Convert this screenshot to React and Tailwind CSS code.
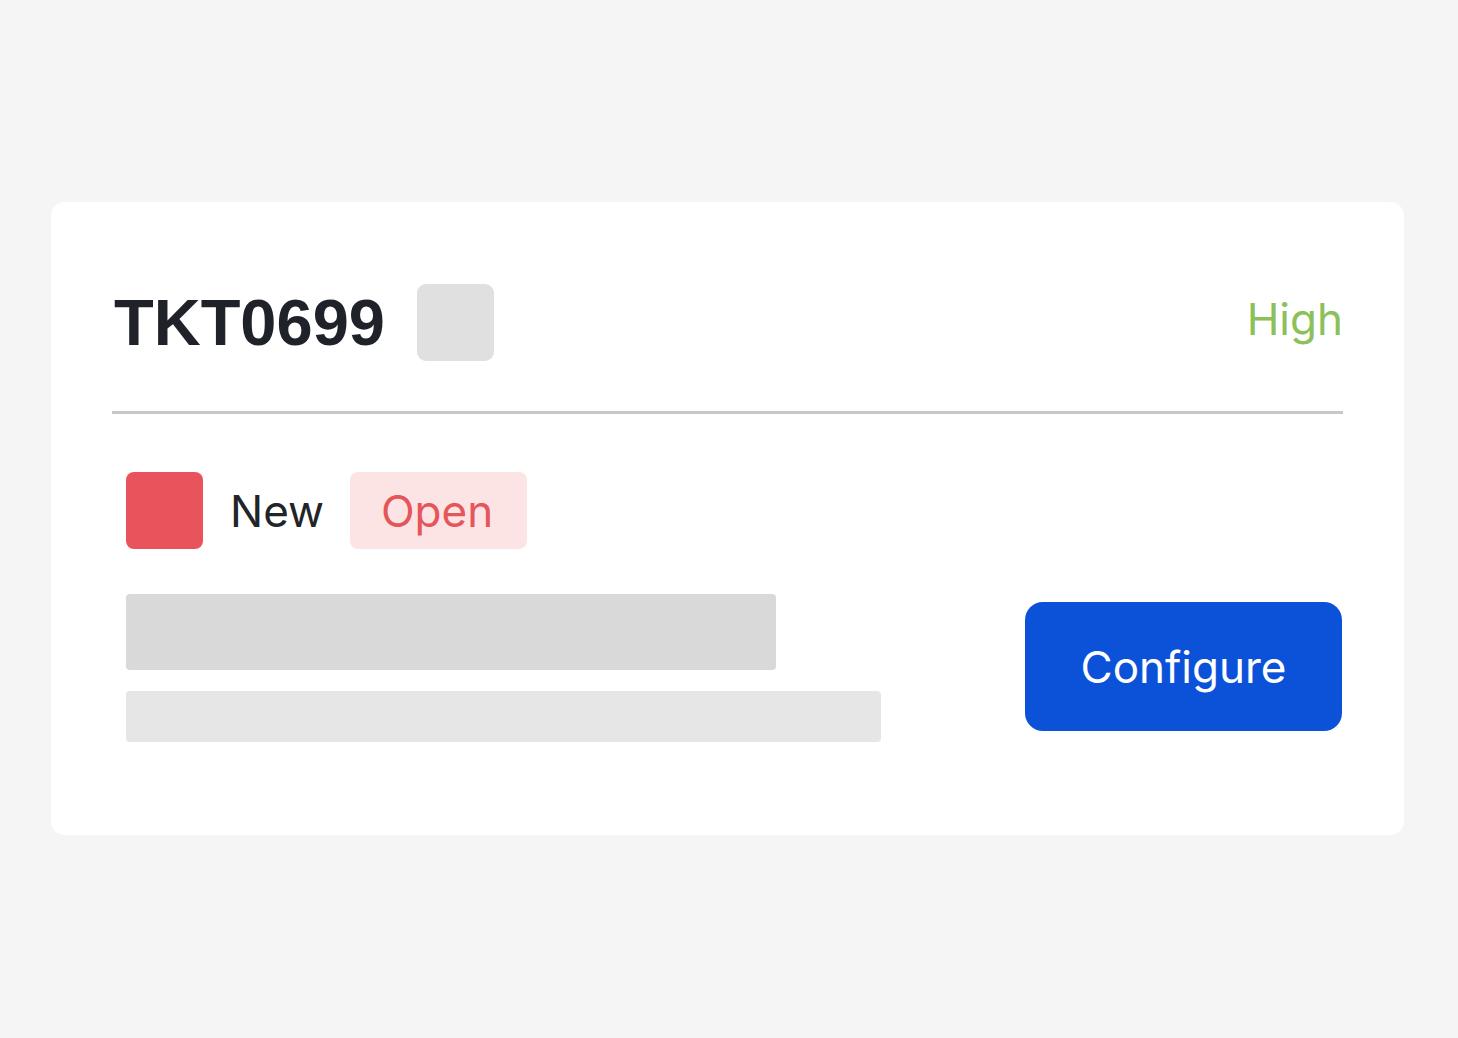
export default function App() {
  return (
    <div className="min-h-screen w-full bg-[#f5f5f5] pt-[202px] px-[51px] font-['Inter',sans-serif]">
      <div className="w-[1353px] h-[633px] bg-white rounded-[14px] px-[61px] pt-[82px]">
        <div className="flex items-center justify-between h-[77px]">
          <div className="flex items-center gap-[32px]">
            <span className="font-['Liberation_Sans',Arial,sans-serif] font-bold text-[65px] leading-none text-[#1f2228] pl-[2px]">
              TKT0699
            </span>
            <div className="w-[77px] h-[77px] rounded-[9px] bg-[#e0e0e0]" />
          </div>
          <span className="text-[44px] leading-none text-[#8bc05a] -mt-[8px]">High</span>
        </div>

        <div className="mt-[50px] h-[3px] bg-[#c8c8c8]" />

        <div className="px-[14px]">
          <div className="flex items-center mt-[58px] h-[77px]">
            <div className="w-[77px] h-[77px] rounded-[8px] bg-[#e9545c]" />
            <span className="ml-[27px] text-[44px] leading-none text-[#222428]">New</span>
            <div className="ml-[26px] h-[77px] w-[177px] rounded-[8px] bg-[#fde4e4] flex items-center justify-center pr-[3px]">
              <span className="text-[44px] leading-none text-[#e5565b]">Open</span>
            </div>
          </div>

          <div className="flex items-center justify-between mt-[45px]">
            <div className="flex flex-col gap-[21px]">
              <div className="w-[650px] h-[76px] rounded-[4px] bg-[#d9d9d9]" />
              <div className="w-[755px] h-[51px] rounded-[4px] bg-[#e6e6e6]" />
            </div>
            <button className="w-[317px] h-[129px] rounded-[18px] bg-[#0b52d9] text-white text-[44px] leading-none flex items-center justify-center -mr-[13px] -mt-[3px]">
              Configure
            </button>
          </div>
        </div>
      </div>
    </div>
  );
}
